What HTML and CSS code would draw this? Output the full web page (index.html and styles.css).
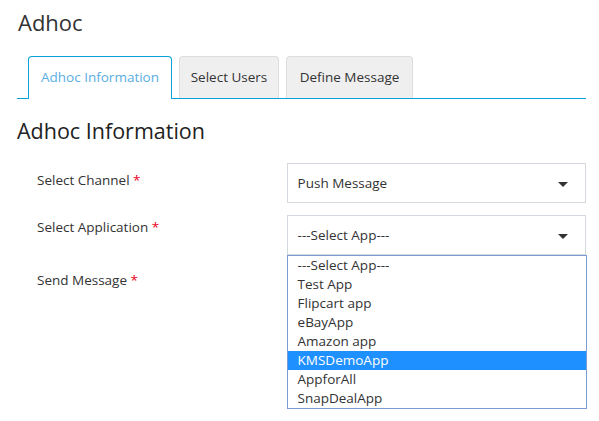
FILE: index.html
```html
<!DOCTYPE html>
<html>
<head>
<meta charset="utf-8">
<link rel="stylesheet" href="styles.css">
</head>
<body>
<div class="page">
  <h1 class="title">Adhoc</h1>
  <ul class="tabs">
    <li class="tab active tab-info">Adhoc Information</li>
    <li class="tab tab-users">Select Users</li>
    <li class="tab tab-msg">Define Message</li>
  </ul>
  <h2 class="section">Adhoc Information</h2>
  <div class="form">
    <div class="row row1">
      <label class="label">Select Channel <span class="req">*</span></label>
      <div class="field">
        <div class="select"><span>Push Message</span><span class="caret"></span></div>
      </div>
    </div>
    <div class="row row2">
      <label class="label">Select Application <span class="req">*</span></label>
      <div class="field">
        <div class="select"><span>---Select App---</span><span class="caret"></span></div>
        <ul class="dropdown">
          <li>---Select App---</li>
          <li>Test App</li>
          <li>Flipcart app</li>
          <li>eBayApp</li>
          <li>Amazon app</li>
          <li class="hl">KMSDemoApp</li>
          <li>AppforAll</li>
          <li>SnapDealApp</li>
        </ul>
      </div>
    </div>
    <div class="row row3">
      <label class="label">Send Message <span class="req">*</span></label>
      <div class="field"></div>
    </div>
  </div>
</div>
</body>
</html>
```
FILE: styles.css
```css
* { box-sizing: border-box; }
html, body { margin: 0; padding: 0; background: #fff; }
body {
  font-family: "Open Sans", "Noto Sans", sans-serif;
  color: #333;
  font-size: 13.5px;
}
.page { padding: 0 13px 0 17px; min-height: 421px; }
.title {
  margin: 0;
  padding: 9px 0 0 1px;
  font-size: 22px;
  font-weight: 400;
  line-height: 26px;
  height: 56px;
  color: #333;
}
.tabs {
  list-style: none;
  margin: 0;
  padding: 0 0 0 11px;
  display: flex;
  gap: 7px;
  border-bottom: 1px solid #0aa0d8;
  height: 43px;
}
.tab {
  height: 42px;
  padding: 0 0 1px;
  border: 1px solid #ddd;
  border-bottom: none;
  border-radius: 4px 4px 0 0;
  background: #efefef;
  display: flex;
  align-items: center;
  justify-content: center;
  color: #333;
  white-space: nowrap;
}
.tab-info { width: 144px; }
.tab-users { width: 100px; }
.tab-msg { width: 127px; }
.tab.active {
  background: #fff;
  border-color: #0aa0d8;
  color: #5aaee2;
  height: 43px;
  padding: 0 0 2px;
}
.section {
  margin: 0;
  padding: 18px 0 0;
  font-size: 21.5px;
  font-weight: 400;
  line-height: 28px;
  height: 64px;
  color: #222;
}
.form { padding-left: 20px; }
.row { display: flex; margin-bottom: 12px; }
.label {
  width: 250px;
  padding-top: 7px;
  line-height: 20px;
  color: #333;
}
.row2 .label { padding-top: 2px; }
.req { color: #e8001c; }
.field { position: relative; width: 300px; }
.select {
  height: 40px;
  border: 1px solid #d3d9df;
  display: flex;
  align-items: center;
  justify-content: space-between;
  padding: 0 17px 0 10px;
  color: #333;
}
.caret {
  width: 0; height: 0;
  border-left: 5px solid transparent;
  border-right: 5px solid transparent;
  border-top: 5px solid #333;
  margin-top: 2px;
}
.dropdown {
  position: absolute;
  left: 0; top: 40px;
  width: 300px;
  margin: 0; padding: 0;
  list-style: none;
  border: 1px solid #7b9bd3;
  background: #fff;
  z-index: 2;
}
.dropdown li {
  height: 19px;
  line-height: 19px;
  padding-left: 10px;
  color: #333;
}
.dropdown li.hl { background: #1e90ff; color: #fff; }
.row3 .label { padding-top: 3px; }
```
